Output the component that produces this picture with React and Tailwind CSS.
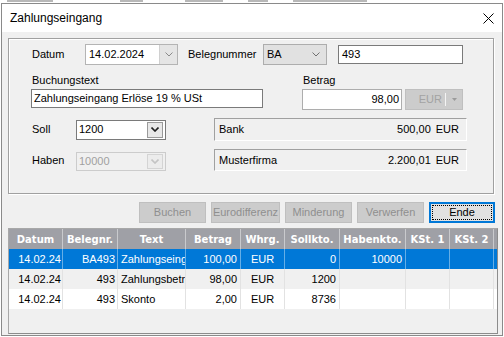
import React from 'react'

const Chevron = ({ color = '#606060', sw = 1 }) => (
  <svg width="8" height="5" viewBox="0 0 8 5">
    <path d="M0.5 0.5 L4 4 L7.5 0.5" fill="none" stroke={color} strokeWidth={sw} />
  </svg>
)

const columns = [
  { key: 'datum', label: 'Datum', w: 'w-[54px]', align: 'justify-end pr-[1px]' },
  { key: 'beleg', label: 'Belegnr.', w: 'w-[55px]', align: 'justify-end pr-[2px]' },
  { key: 'text', label: 'Text', w: 'w-[68px]', align: 'justify-start pl-[3px]' },
  { key: 'betrag', label: 'Betrag', w: 'w-[55px]', align: 'justify-end pr-[3px]' },
  { key: 'whrg', label: 'Whrg.', w: 'w-[44px]', align: 'justify-center' },
  { key: 'soll', label: 'Sollkto.', w: 'w-[55px]', align: 'justify-end pr-[3px]' },
  { key: 'haben', label: 'Habenkto.', w: 'w-[66px]', align: 'justify-end pr-[3px]' },
  { key: 'k1', label: 'KSt. 1', w: 'w-[44px]', align: 'justify-end pr-[3px]' },
  { key: 'k2', label: 'KSt. 2', w: 'w-[44px]', align: 'justify-end pr-[3px]' },
]

// Text column shows only what fits, as in the grid
const rows = [
  { datum: '14.02.24', beleg: 'BA493', text: 'Zahlungseing', betrag: '100,00', whrg: 'EUR', soll: '0', haben: '10000', k1: '', k2: '' },
  { datum: '14.02.24', beleg: '493', text: 'Zahlungsbetr', betrag: '98,00', whrg: 'EUR', soll: '1200', haben: '', k1: '', k2: '' },
  { datum: '14.02.24', beleg: '493', text: 'Skonto', betrag: '2,00', whrg: 'EUR', soll: '8736', haben: '', k1: '', k2: '' },
]

const buttons = [
  { label: 'Buchen', w: 'w-[67px]' },
  { label: 'Eurodifferenz', w: 'w-[69px]' },
  { label: 'Minderung', w: 'w-[67px]' },
  { label: 'Verwerfen', w: 'w-[67px]' },
]

const App = () => {
  return (
    <div className="w-[504px] h-[337px] bg-white overflow-hidden font-['Liberation_Sans',Arial,sans-serif] text-[11px] text-black">
      {/* Reste vom Fenster dahinter */}
      <div className="h-[3px] flex items-start pl-[7px]">
        <div className="w-[46px] h-[2px] bg-[#b8b8b8]" />
        <div className="w-[23px] h-[2px] bg-[#b8b8b8] ml-[67px]" />
        <div className="w-[38px] h-[2px] bg-[#b8b8b8] ml-[42px]" />
        <div className="w-[20px] h-[2px] bg-[#b8b8b8] ml-[25px]" />
        <div className="w-[74px] h-[2px] bg-[#b8b8b8] ml-[25px]" />
      </div>

      {/* Fenster */}
      <div className="ml-[1px] w-[502px] h-[333px] border border-[#8a8a8a] flex flex-col">
        {/* Titelleiste */}
        <div className="h-[28px] bg-white flex items-center justify-between pl-[8px] pr-[8px]">
          <span className="text-[12px] leading-none">Zahlungseingang</span>
          <svg width="11" height="11" viewBox="0 0 11 11">
            <path d="M0.5 0.5 L10.5 10.5 M10.5 0.5 L0.5 10.5" stroke="#000" strokeWidth="1" />
          </svg>
        </div>

        <div className="flex-1 bg-[#f0f0f0] pt-[6px] px-[6px] flex flex-col">
          {/* Gruppenrahmen */}
          <div className="w-[486px] h-[156px] border border-[#a0a0a0] shadow-[inset_1px_1px_0_#fff,1px_1px_0_#fff] flex flex-col">
            {/* Datum / Belegnummer */}
            <div className="mt-[5px] h-[21px] flex items-center pl-[23px]">
              <span className="w-[53px]">Datum</span>
              <div className="w-[93px] h-[21px] bg-white border border-[#b4b4b4] flex">
                <span className="flex-1 pl-[3px] flex items-center">14.02.2024</span>
                <div className="w-[18px] bg-[#e5e5e5] border-l border-[#d0d0d0] flex items-center justify-center">
                  <Chevron color="#8a8a8a" />
                </div>
              </div>
              <span className="ml-[10px] w-[75px]">Belegnummer</span>
              <div className="w-[64px] h-[21px] bg-[#e1e1e1] border border-[#adadad] flex items-center justify-between pl-[3px] pr-[6px]">
                <span>BA</span>
                <Chevron color="#707070" />
              </div>
              <div className="ml-[11px] w-[125px] h-[19px] bg-white border border-[#7a7a7a] flex items-center pl-[3px]">
                493
              </div>
            </div>

            {/* Beschriftungen */}
            <div className="mt-[8px] h-[14px] flex items-center pl-[23px]">
              <span className="w-[271px]">Buchungstext</span>
              <span>Betrag</span>
            </div>

            {/* Buchungstext / Betrag */}
            <div className="mt-[2px] h-[21px] flex items-start pl-[22px]">
              <div className="w-[232px] h-[19px] bg-white border border-[#7a7a7a] flex items-center pl-[2px] whitespace-nowrap overflow-hidden">
                Zahlungseingang Erlöse 19 % USt
              </div>
              <div className="ml-[39px] w-[100px] h-[21px] bg-white border border-[#adadad] flex items-center justify-end pr-[2px]">
                98,00
              </div>
              <div className="ml-[3px] w-[58px] h-[21px] bg-[#cccccc] border border-[#bfbfbf] flex items-center justify-end pr-[5px]">
                <span className="text-[#a3a3a3]">EUR</span>
                <div className="w-[1px] h-[13px] bg-[#f4f4f4] ml-[3px] mr-[6px]" />
                <svg width="5" height="3" viewBox="0 0 5 3">
                  <path d="M0 0 L5 0 L2.5 3 Z" fill="#9a9a9a" />
                </svg>
              </div>
            </div>

            {/* Soll */}
            <div className="mt-[8px] h-[23px] flex items-center pl-[23px]">
              <span className="w-[44px]">Soll</span>
              <div className="w-[90px] h-[20px] bg-white border border-[#7a7a7a] flex items-center justify-between pl-[2px] pr-[2px]">
                <span>1200</span>
                <div className="w-[16px] h-[16px] bg-[#e8e8e8] border border-[#9a9a9a] flex items-center justify-center">
                  <Chevron color="#202020" sw={1.6} />
                </div>
              </div>
              <div className="ml-[48px] w-[253px] h-[23px] border-t border-l border-[#a0a0a0] border-r-white border-b-white border-r border-b flex items-center justify-between pl-[4px] pr-[7px]">
                <span>Bank</span>
                <span>500,00<span className="ml-[5px]">EUR</span></span>
              </div>
            </div>

            {/* Haben */}
            <div className="mt-[8px] h-[22px] flex items-end pl-[23px]">
              <span className="w-[44px] self-center">Haben</span>
              <div className="w-[90px] h-[19px] bg-[#f0f0f0] border border-[#cccccc] flex items-center justify-between pl-[2px] pr-[2px]">
                <span className="text-[#a0a0a0]">10000</span>
                <div className="w-[16px] h-[15px] bg-[#ececec] border border-[#d4d4d4] flex items-center justify-center">
                  <Chevron color="#c4c4c4" sw={1.6} />
                </div>
              </div>
              <div className="ml-[48px] w-[253px] h-[22px] border-t border-l border-[#a0a0a0] border-r-white border-b-white border-r border-b flex items-center justify-between pl-[4px] pr-[7px]">
                <span>Musterfirma</span>
                <span>2.200,01<span className="ml-[5px]">EUR</span></span>
              </div>
            </div>
          </div>

          {/* Knöpfe */}
          <div className="mt-[8px] h-[21px] flex justify-end gap-[5px] pr-[1px]">
            {buttons.map((b) => (
              <div key={b.label} className={`${b.w} h-[21px] bg-[#cccccc] border border-[#bfbfbf] flex items-center justify-center text-[#8f8f8f]`}>
                {b.label}
              </div>
            ))}
            <div className="w-[66px] h-[21px] bg-[#e1e1e1] border-2 border-[#0078d7] p-[1px]">
              <div className="w-full h-full border border-dotted border-black flex items-center justify-center">
                Ende
              </div>
            </div>
          </div>

          {/* Tabelle */}
          <div className="mt-[5px] w-[490px] h-[106px] bg-[#f0f0f0] border border-[#8c8c8c] border-t-[#a8a8a8] border-l-[#a8a8a8]">
            <div className="flex h-[20px] bg-[#9fa0a6] font-['DejaVu_Sans',Verdana,sans-serif] font-bold text-[10px] text-white">
              {columns.map((c) => (
                <div key={c.key} className={`${c.w} border-r border-[#c9cacd] flex items-center justify-center`}>
                  {c.label}
                </div>
              ))}
            </div>
            {rows.map((r, i) => {
              const sel = i === 0
              const bg = sel ? 'bg-[#0078d7] text-white' : i === 1 ? 'bg-[#f0f0f0]' : 'bg-white'
              return (
                <div key={i} className={`flex h-[20px] ${bg}`}>
                  {columns.map((c) => (
                    <div
                      key={c.key}
                      className={`${c.w} flex items-center whitespace-nowrap overflow-hidden border-r ${sel ? 'border-[#66aee6]' : 'border-[#e2e2e2]'} ${c.align}`}
                    >
                      {r[c.key]}
                    </div>
                  ))}
                </div>
              )
            })}
          </div>
        </div>
      </div>
    </div>
  )
}

export default App
